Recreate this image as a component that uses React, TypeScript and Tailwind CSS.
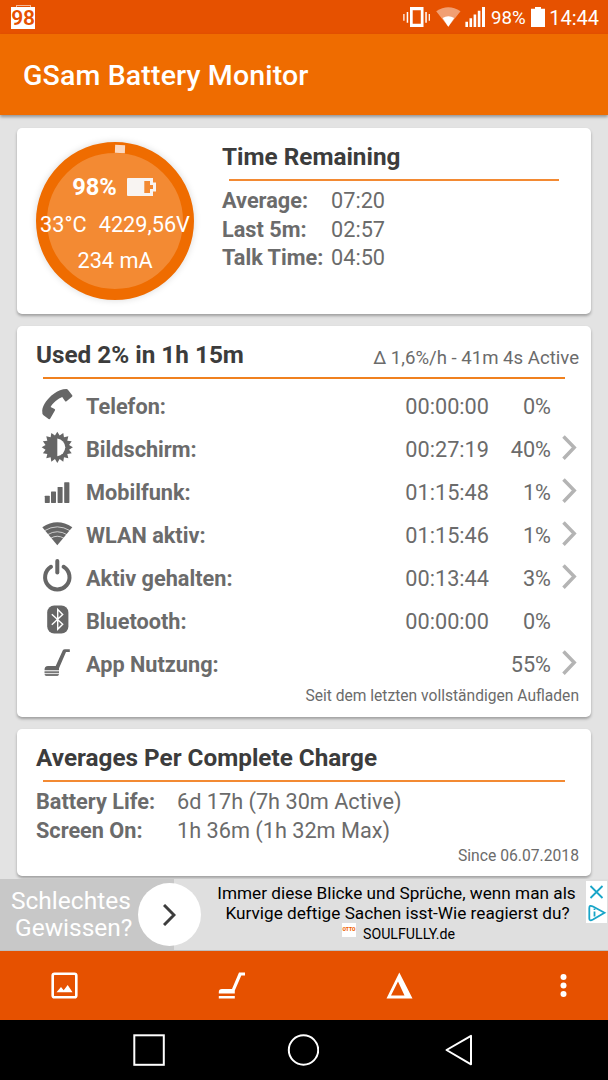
import React from 'react';

type UsageItem = {
  label: string;
  time?: string;
  percent: string;
  icon: React.ReactNode;
  more?: boolean;
};

const SUN_RAYS = Array.from({ length: 32 }, (_, i) => {
  const r = i % 2 === 0 ? 15.6 : 12;
  const a = (i * Math.PI) / 16 - Math.PI / 2;
  return `${(16.3 + r * Math.cos(a)).toFixed(2)},${(20.3 + r * Math.sin(a)).toFixed(2)}`;
}).join(' ');

const RowIcon: React.FC<{ children: React.ReactNode }> = ({ children }) => (
  <svg className="w-8 h-[43px] shrink-0" viewBox="0 0 32 43" fill="#666">
    {children}
  </svg>
);

const PhoneIcon = () => (
  <RowIcon>
    <path d="M1.200 26.500C1.800 20.500 7 14 12.500 10C17 6.800 21 5 25.500 5Q26.300 5.100 26.900 5.800L31.200 11.200Q31.800 12 31 12.700L25.500 17.200Q24.600 17.900 24 17L21.200 13C17.500 14.300 11.500 19.300 9.600 23L13.600 25Q14.500 25.600 13.900 26.500L9.300 34.600Q8.700 35.700 7.600 35L2.500 31.300Q1 30.200 1.200 26.500Z" />
  </RowIcon>
);

const ScreenIcon = () => (
  <RowIcon>
    <polygon points={SUN_RAYS} />
    <path d="M16.3 11.500A8.900 8.900 0 0 1 16.300 29.200Z" fill="#fff" />
  </RowIcon>
);

const SignalIcon = () => (
  <RowIcon>
    <rect x="3.800" y="25.700" width="5" height="7.200" rx=".6" />
    <rect x="10" y="21.500" width="5" height="11.400" rx=".6" />
    <rect x="16.600" y="17" width="5" height="15.900" rx=".6" />
    <rect x="23.200" y="12.200" width="5.200" height="20.700" rx=".6" />
  </RowIcon>
);

const WifiIcon = () => (
  <RowIcon>
    <path d="M1.300 14.200Q16.300 4.300 31.300 14.200L16.300 32.300Z" />
    <g fill="none" stroke="#fff" strokeWidth=".8" strokeOpacity=".85">
      <path d="M3.500 17.700Q16.300 10 29.100 17.700" />
      <path d="M6.500 21.700Q16.300 15.800 26.100 21.700" />
      <path d="M9.600 25.300Q16.300 21.200 23 25.300" />
    </g>
  </RowIcon>
);

const PowerIcon = () => (
  <RowIcon>
    <g fill="none" stroke="#666" strokeWidth="4" strokeLinecap="round">
      <path d="M10 10.800A12.200 12.200 0 1 0 22.600 10.800" />
      <path d="M16.300 5V16.500" />
    </g>
  </RowIcon>
);

const BluetoothIcon = () => (
  <RowIcon>
    <rect x="6.200" y="6.500" width="21.200" height="28" rx="7" />
    <path d="M10.800 15.200L21.700 25.200L16.700 30.200V10.500L21.700 15.500L10.800 25.700" fill="none" stroke="#fff" strokeWidth="1.400" />
  </RowIcon>
);

const SweepIcon = () => (
  <RowIcon>
    <path d="M28.800 7.200V9.900H25L18 26.300V28.200H3.500Q3.500 24 7 24H14.700L21.700 8.600Q22.300 7.200 24 7.200Z" />
    <path d="M3.500 29.200H18V30.900H3.500ZM3.500 31.800H18Q18 33.900 16.500 33.900H5Q3.500 33.900 3.500 31.800Z" fill="#777" />
  </RowIcon>
);

const usage: UsageItem[] = [
  { label: 'Telefon:', time: '00:00:00', percent: '0%', icon: <PhoneIcon /> },
  { label: 'Bildschirm:', time: '00:27:19', percent: '40%', icon: <ScreenIcon />, more: true },
  { label: 'Mobilfunk:', time: '01:15:48', percent: '1%', icon: <SignalIcon />, more: true },
  { label: 'WLAN aktiv:', time: '01:15:46', percent: '1%', icon: <WifiIcon />, more: true },
  { label: 'Aktiv gehalten:', time: '00:13:44', percent: '3%', icon: <PowerIcon />, more: true },
  { label: 'Bluetooth:', time: '00:00:00', percent: '0%', icon: <BluetoothIcon /> },
  { label: 'App Nutzung:', percent: '55%', icon: <SweepIcon />, more: true },
];

const remaining = [
  { label: 'Average:', value: '07:20' },
  { label: 'Last 5m:', value: '02:57' },
  { label: 'Talk Time:', value: '04:50' },
];

const averages = [
  { label: 'Battery Life:', value: '6d 17h (7h 30m Active)' },
  { label: 'Screen On:', value: '1h 36m (1h 32m Max)' },
];

const StatusBar = () => (
  <div className="h-[34px] bg-[#e65100] flex items-center text-white pl-[11px] pr-[9px] shrink-0">
    <div className="flex flex-col items-center">
      <div className="w-[15px] h-[2px] border border-b-0 border-white/60" />
      <div className="w-6 h-[22px] bg-white text-[#e65100] text-[21px] leading-[22px] font-semibold tracking-[-0.3px] flex justify-center">98</div>
    </div>
    <svg className="ml-auto w-[83px] h-5" viewBox="0 0 83 20" fill="#fff">
      <path d="M7 0H20.500V20H7ZM9.700 3.300V16.700H17.800V3.300Z" fillRule="evenodd" />
      <path d="M.3 7H1.500V13.700H.3ZM3.700 5H5.200V15.700H3.700ZM22.300 5H23.800V15.700H22.300ZM25.700 7H26.900V13.700H25.700Z" />
      <path d="M33.200 4.200Q45.300 -3.800 57.500 4.200L45.300 19.700Z" fillOpacity=".45" />
      <path d="M39.600 11Q45.300 7.600 51.200 11L45.300 19.700Z" />
      <path d="M62.400 14.700H65V20H62.400ZM66.500 11.300H69.100V20H66.500ZM70.600 7.600H73.200V20H70.600ZM74.800 3.700H77.400V20H74.800ZM79 0H82V20H79Z" />
    </svg>
    <span className="ml-[5px] w-[35px] text-[18.700px] leading-[34px] pt-[2px] whitespace-nowrap">98%</span>
    <svg className="ml-[5px] w-[14px] h-5" viewBox="0 0 14 20" fill="#fff">
      <path d="M4 0H10V1.700H14V20H0V1.700H4Z" />
    </svg>
    <span className="ml-1 w-[50px] text-right text-[20px] leading-[34px] pt-[2px] whitespace-nowrap">14:44</span>
  </div>
);

const Card: React.FC<{ className: string; children: React.ReactNode }> = ({ className, children }) => (
  <section className={`mx-[17px] bg-white rounded-[5px] shadow-[0_2px_3px_rgba(0,0,0,0.3)] ${className}`}>
    {children}
  </section>
);

const CardTitle: React.FC<{ children: React.ReactNode }> = ({ children }) => (
  <h2 className="h-11 text-[24.300px] leading-[43px] font-bold text-[#3c3c3c] whitespace-nowrap">{children}</h2>
);

const Gauge = () => (
  <div className="relative mt-[14px] w-[158px] h-[158px] shrink-0 rounded-full border-[11px] border-[#ef6c00] bg-[#f38a33] shadow-[0_0_7px_rgba(0,0,0,0.15)] flex flex-col items-center text-white whitespace-nowrap">
    <div className="absolute -top-[8px] left-[68px] w-[10px] h-2 bg-[#fad9c2] rotate-2" />
    <div className="mt-[16px] h-[37px] flex items-center -ml-[2px]">
      <span className="text-[23.700px] font-bold">98%</span>
      <svg className="ml-[10px] -mt-[2px] w-[29px] h-[18px]" viewBox="0 0 29 18">
        <path d="M1 0H26V4.500H29V13.500H26V18H1Q0 18 0 17V1Q0 0 1 0ZM17.300 3V15H23V11H26V7H23V3Z" fill="#f8f4f2" fillRule="evenodd" />
      </svg>
    </div>
    <div className="mt-[1px] h-9 text-[21.700px] leading-9 flex gap-[12px]">
      <span>33°C</span>
      <span>4229,56V</span>
    </div>
    <div className="h-9 text-[21.700px] leading-9">234 mA</div>
  </div>
);

const AdBanner = () => (
  <div className="mt-[3px] h-[72px] flex bg-[#dfdfdf] shrink-0 border-b border-[#bdbdbd]">
    <div className="relative w-[174px] bg-[#c8c8c8] text-white text-[24.500px] leading-[27px] pt-[8px] shrink-0">
      <div className="pl-[11px]">Schlechtes</div>
      <div className="pl-[15px]">Gewissen?</div>
      <div className="absolute left-[138px] top-[4px] w-[63px] h-[63px] rounded-full bg-white flex items-center justify-center">
        <svg className="w-[13px] h-[22px]" viewBox="0 0 13 22" fill="none" stroke="#3d3d3d" strokeWidth="3">
          <path d="M1 1L11 11L1 21" />
        </svg>
      </div>
    </div>
    <div className="flex-1 pl-[34px] pt-[4px] text-center text-black text-[17.200px] leading-5 whitespace-nowrap">
      <div>Immer diese Blicke und Sprüche, wenn man als</div>
      <div className="pl-[2px]">Kurvige deftige Sachen isst-Wie reagierst du?</div>
      <div className="flex justify-center pl-1 gap-[7px] text-[14.200px]">
        <span className="w-[14px] h-[14px] bg-white text-[#f06400] text-[5px] leading-[13px] font-black flex justify-center">OTTO</span>
        <span className="leading-[23px]">SOULFULLY.de</span>
      </div>
    </div>
    <svg className="mt-[2px] ml-[1px] mr-[1px] w-[21px] h-[42px] bg-white shrink-0" viewBox="0 0 21 42" fill="none" stroke="#18a5c8" strokeWidth="1.800">
      <path d="M4.500 5L16.500 17M16.500 5L4.500 17" />
      <path d="M7 25.500L18.500 31.700L7 38.500M7 38.500Q3.300 40.500 3.300 37.500V27Q3.300 23.500 7 25.500" />
      <path d="M8.500 30.500V35.500M8.500 27.500V29" />
    </svg>
  </div>
);

const Toolbar = () => (
  <div className="h-[69px] bg-[#e65100] flex items-center shrink-0 pl-[51px] pb-px">
    <svg className="w-[27px] h-[27px]" viewBox="0 0 27 27" fill="none">
      <rect x="1.700" y="1.700" width="23.600" height="23.600" rx="1.800" stroke="#fff" strokeWidth="2.600" />
      <path d="M5.500 20.300L10 15L12.700 18.200L16.700 13L21.500 20.300Z" fill="#fff" />
    </svg>
    <svg className="ml-[140px] w-[27px] h-[27px]" viewBox="0 0 27 27" fill="#fff">
      <path d="M21 .6H27V3.400H23.300L16.800 18.500V21.500H.8V20Q.8 17 4 17H14ZM.8 24H16.800V26.400H.8Z" />
    </svg>
    <svg className="ml-[141px] w-[27px] h-[27px]" viewBox="0 0 27 27" fill="#fff">
      <path d="M13.300 .4L26.500 26.500H.5ZM12 9.500L5 23.500H18.500Z" fillRule="evenodd" />
    </svg>
    <svg className="ml-[147px] w-2 h-[27px]" viewBox="0 0 8 27" fill="#fff">
      <circle cx="3.500" cy="5" r="3" />
      <circle cx="3.500" cy="13.500" r="3" />
      <circle cx="3.500" cy="22" r="3" />
    </svg>
  </div>
);

const NavBar = () => (
  <div className="h-[60px] bg-black flex items-center shrink-0 pl-[133px]">
    <svg className="w-8 h-8" viewBox="0 0 32 32" fill="none" stroke="#fff" strokeWidth="2">
      <rect x="1.300" y="1.300" width="29.500" height="29.500" />
    </svg>
    <svg className="ml-[122px] w-8 h-8" viewBox="0 0 32 32" fill="none" stroke="#fff" strokeWidth="2">
      <circle cx="16.500" cy="16" r="14.700" />
    </svg>
    <svg className="ml-[126px] w-7 h-8" viewBox="0 0 28 32" fill="none" stroke="#fff" strokeWidth="2" strokeLinejoin="round">
      <path d="M26 1.800V30.300L1.500 16Z" />
    </svg>
  </div>
);

const App: React.FC = () => {
  return (
    <div className="w-[608px] h-[1080px] overflow-hidden flex flex-col bg-[#e3e3e3] font-['Roboto',sans-serif] text-[#6b6b6b]">
      <StatusBar />
      <header className="h-[81px] shrink-0 bg-[#ef6c00] shadow-[0_2px_3px_rgba(0,0,0,0.35)] flex items-center pl-[23px] pt-[3px]">
        <h1 className="text-white text-[28.500px] tracking-[0.150px] font-medium whitespace-nowrap">GSam Battery Monitor</h1>
      </header>

      {/* Time remaining */}
      <Card className="mt-[13px] h-[186px] shrink-0 flex pl-[19px]">
        <Gauge />
        <div className="ml-7 pt-[7px] flex-1">
          <CardTitle>Time Remaining</CardTitle>
          <div className="ml-[7px] w-[330px] h-[2px] bg-[#f38a33]" />
          <div className="mt-[6px] text-[21.700px] leading-[28.700px]">
            {remaining.map(r => (
              <div key={r.label} className="flex">
                <span className="w-[109px] font-bold whitespace-nowrap">{r.label}</span>
                <span>{r.value}</span>
              </div>
            ))}
          </div>
        </div>
      </Card>

      {/* Usage */}
      <Card className="mt-3 h-[391px] shrink-0 pt-[7px]">
        <div className="flex justify-between pl-[19px] pr-3">
          <CardTitle>Used 2% in 1h 15m</CardTitle>
          <span className="text-[18.600px] leading-[51px] h-11 whitespace-nowrap">Δ 1,6%/h - 41m 4s Active</span>
        </div>
        <div className="ml-[26px] w-[522px] h-[2px] bg-[#f0811f]" />
        <div className="mt-[5px] pl-6 pr-3">
          {usage.map(item => (
            <div key={item.label} className="h-[43px] flex items-center text-[21.700px] leading-[43px]">
              {item.icon}
              <span className="ml-[13px] pt-px flex-1 font-bold">{item.label}</span>
              <span className="pt-px">{item.time}</span>
              <span className="w-[62px] pt-px text-right">{item.percent}</span>
              <span className="w-7 pl-[11px]">
                {item.more && (
                  <svg className="w-4 h-[43px]" viewBox="0 0 16 43" fill="none" stroke="#b4b4b4" strokeWidth="3.500">
                    <path d="M1.500 9.500L12.200 20.500L1.500 31.700" />
                  </svg>
                )}
              </span>
            </div>
          ))}
        </div>
        <div className="pr-3 text-right text-[15.600px] leading-[23px]">Seit dem letzten vollständigen Aufladen</div>
      </Card>

      {/* Averages */}
      <Card className="mt-3 h-[147px] shrink-0 pt-[7px]">
        <div className="pl-[19px]">
          <CardTitle>Averages Per Complete Charge</CardTitle>
        </div>
        <div className="ml-[26px] w-[522px] h-[2px] bg-[#f38a33]" />
        <div className="mt-[6px] pl-[19px] text-[21.700px] leading-[28.700px]">
          {averages.map(a => (
            <div key={a.label} className="flex">
              <span className="w-[141px] font-bold">{a.label}</span>
              <span>{a.value}</span>
            </div>
          ))}
        </div>
        <div className="pr-3 text-right text-[15.700px] leading-[21px]">Since 06.07.2018</div>
      </Card>

      <AdBanner />
      <Toolbar />
      <NavBar />
    </div>
  );
};

export default App;
